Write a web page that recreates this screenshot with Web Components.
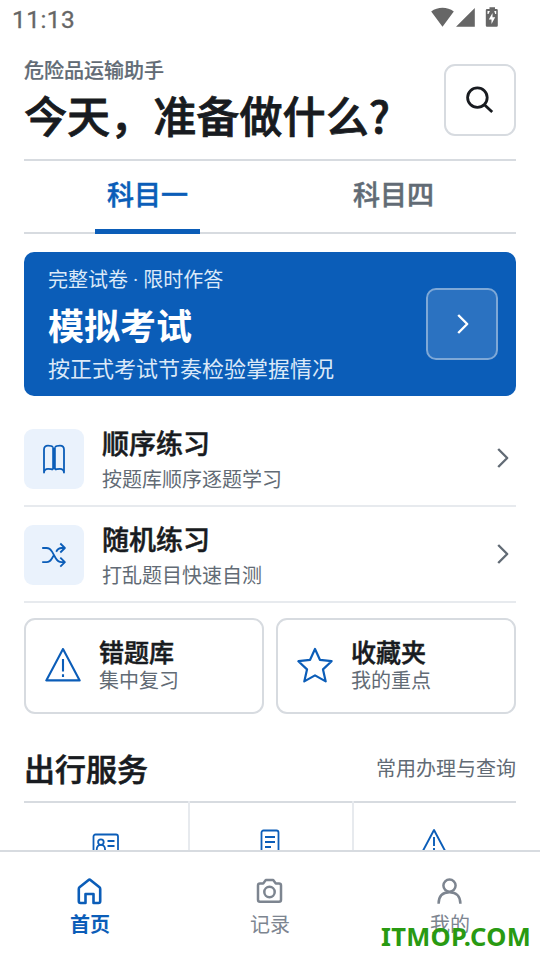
<!DOCTYPE html>
<html lang="zh-CN">
<head>
<meta charset="utf-8">
<title>危险品运输助手</title>
<style>
html,body{margin:0;padding:0}
body{width:540px;height:960px;overflow:hidden;background:#fff;
 --blue:#0b5db8;--ink:#181b20;--muted:#626b75;--line:#d7dbe0;--soft:#e7eaee;
 font-family:"Noto Sans CJK SC",sans-serif;color:var(--ink)}
</style>
</head>
<body>
<exam-app></exam-app>
<script>
const define = (name, css, html) => customElements.define(name, class extends HTMLElement {
  constructor() {
    super();
    const root = this.attachShadow({mode: 'open'});
    const t = document.createElement('template');
    t.innerHTML = `<style>*{box-sizing:border-box}:host{box-sizing:border-box;display:block}${css}</style>${typeof html === 'function' ? '' : html}`;
    root.append(t.content.cloneNode(true));
    if (typeof html === 'function') {
      const body = document.createElement('template');
      body.innerHTML = html(this);
      root.append(body.content.cloneNode(true));
    }
  }
});

const ICONS = {
  search: ['0 0 28 28', '<circle cx="11.4" cy="11.6" r="9.8"/><path d="M18.7 18.9 26.2 26"/>', 2.8],
  chevron: ['0 0 12 20', '<path d="M1.2 1 10.2 10 1.200 19"/>', 2.4],
  book: ['0 0 24 30', '<path d="M11.100 3.2v22.2M12.900 3.2v22.2M11 2.9C9.8 1.6 8 1.6 6 1.6 3.5 1.6 2 3.2 2 5.6v23c.2-2.2 1.5-3.7 4-3.7 2.200 0 4 0 5 1M13 2.900C14.200 1.600 16 1.600 18 1.600c2.500 0 4 1.600 4 4v23c-.2-2.200-1.500-3.700-4-3.700-2.200 0-4 0-5 1"/>', 1.8],
  shuffle: ['0 0 26 26', '<path d="M1.200 6h4.300c3 0 4.300 1.500 5.700 3.900L14.600 16c1.500 2.700 3 4.100 6 4.100h3.500M1.200 20.100h4.300c3 0 4.300-1.500 5.700-4.100L12.500 13.800M15.200 9.700C16.500 7.300 18 6 20.600 6h3.500M19.300 1.500 23.900 6l-4.600 4.500M19.300 15.600l4.600 4.500-4.600 4.500"/>', 1.8],
  warn: ['0 0 36 36', '<path d="M18 2 1.300 33.400h33.400L18 2z"/><path d="M18 12v12.500M18 27.200v2.800"/>', 2.100],
  star: ['0 0 36 36', '<path d="m18 2 4.900 10.800 11.700 1.400-8.600 8.200 2.700 12L18 28.400 7.300 34.400l2.700-12L1.400 14.200l11.700-1.400z"/>', 2.2],
  card: ['0 0 28 24', '<rect x="1.500" y="1.500" width="24.500" height="20.500" rx="2"/><circle cx="8.900" cy="9.100" r="2.800"/><path d="M4.700 17c0-3.300 1.600-5.100 4.200-5.100s4.200 1.800 4.200 5.100M15.500 8h7M15.500 13h7"/>', 1.8],
  doc: ['0 0 20 26', '<rect x="1.500" y="1.500" width="17" height="23" rx="2"/><path d="M5 8h10M5 13h10M5 18h6"/>', 1.8],
  alert: ['0 0 26 26', '<path d="M13 2 .8 25h24.400L13 2z"/><path d="M13 9v9M13 20v2"/>', 1.9],
  home: ['0 0 28 28', '<path d="M2.800 12.500v11.800q0 1.700 1.700 1.700h5v-9h8v9h5q1.700 0 1.700-1.700V11.900q0-1-.7-1.600L14.700 3.200q-1.200-1-2.400 0L3.500 10.300q-.7.600-.7 1.600z"/>', 2.6],
  camera: ['0 0 28 28', '<path d="M4 6.500h3.200l2.600-3.400h7.400l2.600 3.400H23q2 0 2 2v14.300q0 2-2 2H4q-2 0-2-2V8.500q0-2 2-2z"/><circle cx="13.500" cy="15" r="5.200"/>', 2.5],
  user: ['0 0 28 28', '<circle cx="13.500" cy="8.600" r="6.100"/><path d="M2.600 26.800C2.600 19 6.900 15.300 13.500 15.300s10.900 3.700 10.900 11.500"/>', 2.5]
};

define('ui-icon', 'svg{display:block;width:100%;height:100%;fill:none;stroke:currentColor;stroke-linejoin:round}', el => {
  const [box, body, w] = ICONS[el.getAttribute('name')];
  return `<svg viewBox="${box}" stroke-width="${w}">${body}</svg>`;
});

define('status-bar', ':host{height:40px;display:flex;justify-content:space-between;padding:0 41px 0 12px;color:#666}span{font:24.400px/39px Roboto,sans-serif;letter-spacing:.5px;-webkit-text-stroke:.3px}svg{width:68px;height:22px;margin-top:6px;fill:#666}',
 `<span>11:13</span><svg viewBox="0 0 68 22"><path d="M.2 5.500C6.700.600 16.300.600 22.800 5.500L11.500 20.800zM43.800 2v18.800H25z"/><path fill-rule="evenodd" d="M56 3h2.500V1.200h5.500V3h1.600q1.200 0 1.200 1.200v15.400q0 1.200-1.200 1.200H56q-1.200 0-1.200-1.200V4.200Q54.800 3 56 3zm5.500 4-3.700 6.500h2.700v4.500l3.700-6.800h-2.700z"/><path fill="#fff" d="M56.500 5h2.400l-1.400 3h-1zM63.200 5h2v3h-1z"/></svg>`);

define('app-header', ':host{display:flex;justify-content:space-between;height:121px;margin:0 24px;border-bottom:2px solid var(--line)}p{margin:0;font-size:20px;line-height:28px;font-weight:500;-webkit-text-stroke:.2px;color:var(--muted);padding-top:16px}h1{margin:0;font-size:43.100px;line-height:60px;font-weight:500;-webkit-text-stroke:.8px;white-space:nowrap}div.b{width:72px;height:72px;border:2px solid var(--line);border-radius:11px;margin-top:24px;display:grid;place-items:center}ui-icon{width:28px;height:28px}',
 `<div><p>危险品运输助手</p><h1>今天，准备做什么?</h1></div><div class="b"><ui-icon name="search"></ui-icon></div>`);

define('subject-tabs', ':host{display:flex;height:73px;margin:0 24px;box-shadow:inset 0 -2px var(--line);font-size:27px;line-height:66px;font-weight:500;-webkit-text-stroke:.5px;color:var(--muted)}div{flex:1;display:flex;justify-content:center;padding-left:1px}.on{color:var(--blue);padding:0 0 0 1px}.on span{width:105px;height:73px;text-align:center;border-bottom:5px solid var(--blue)}',
 `<div class="on"><span>科目一</span></div><div><span>科目四</span></div>`);

define('exam-hero', ':host{display:flex;justify-content:space-between;height:144px;margin:18px 24px 0;border-radius:10px;background:var(--blue);color:#dbe9f8;padding:13px 18px 0 24px}p{margin:0;font-size:20px;line-height:30px}p:first-child{font-family:Roboto,"Noto Sans CJK SC",sans-serif}h2{margin:0;color:#fff;font-size:36px;line-height:54px;font-weight:700;margin-top:2px}p.d{font-size:22px;line-height:32px}.b{width:72px;height:72px;border:2px solid #7ea8d7;border-radius:10px;background:#2b72c1;color:#fff;display:grid;place-items:center;margin-top:23px}ui-icon{width:12px;height:20px;margin-left:1px}',
 `<div class="t"><p>完整试卷 · 限时作答</p><h2>模拟考试</h2><p class="d">按正式考试节奏检验掌握情况</p></div><div class="b"><ui-icon name="chevron"></ui-icon></div>`);

define('practice-row', ':host{display:flex;height:96px;margin:0 24px;border-bottom:2px solid var(--soft);padding:18px 7px 0 0}.i{width:60px;height:60px;border-radius:9px;background:#eaf2fc;color:var(--blue);display:grid;place-items:center}.t{flex:1;padding-left:18px;margin-top:-5px}h3{margin:0;font-size:27px;line-height:38px;font-weight:500;-webkit-text-stroke:.5px}p{margin:0;font-size:20px;line-height:34px;color:var(--muted)}.c{width:12px;height:20px;color:var(--muted);margin-top:19px}.book{width:24px;height:30px}.shuffle{width:26px;height:26px}',
 el => `<div class="i"><ui-icon class="${el.getAttribute('icon')}" name="${el.getAttribute('icon')}"></ui-icon></div><div class="t"><h3><slot></slot></h3><p><slot name="note"></slot></p></div><ui-icon class="c" name="chevron"></ui-icon>`);

define('quick-card', ':host{display:flex;flex:1;height:96px;border:2px solid var(--line);border-radius:11px;padding:0 18px 0 19px;gap:18px}ui-icon{width:36px;height:36px;color:var(--blue);margin-top:27px}h3{margin:0;font-size:25px;line-height:30px;font-weight:500;-webkit-text-stroke:.5px;padding-top:16px}p{margin:0;font-size:20px;line-height:27px;color:var(--muted)}',
 el => `<ui-icon name="${el.getAttribute('icon')}"></ui-icon><div><h3><slot></slot></h3><p><slot name="note"></slot></p></div>`);

define('service-section', '.h{display:flex;justify-content:space-between;align-items:center;height:66px;margin:21px 24px 0;color:var(--muted);font-size:20px}h2{margin:0;color:var(--ink);font-size:31px;line-height:44px;font-weight:500;-webkit-text-stroke:.6px}.h span{margin-bottom:1px}.g{margin:0 24px;border-top:2px solid var(--line);height:49px;display:grid;grid-template-columns:166px 164px 162px;}.g div{border-right:2px solid var(--soft);margin-top:-2px;display:flex;justify-content:center}.g div:last-child{border:0}.card{width:28px;height:24px;margin-top:32px}.doc{width:20px;height:26px;margin-top:28px;margin-left:-2px}.alert{width:26px;height:26px;margin:27px 2px 0 0}ui-icon{color:var(--blue);flex:none}',
 `<div class="h"><h2>出行服务</h2><span>常用办理与查询</span></div><div class="g"><div><ui-icon class="card" name="card"></ui-icon></div><div><ui-icon class="doc" name="doc"></ui-icon></div><div><ui-icon class="alert" name="alert"></ui-icon></div></div>`);

define('nav-item', ':host{flex:1;display:flex;flex-direction:column;align-items:center;padding-top:25px;font-size:20px;line-height:30px;color:#7d8590}:host([active]){color:var(--blue);font-weight:700}ui-icon{width:28px;height:28px;margin-bottom:4px}',
 el => `<ui-icon name="${el.getAttribute('icon')}"></ui-icon><span><slot></slot></span>`);

define('bottom-nav', ':host{display:flex;height:110px;background:#fff;border-top:2px solid var(--line)}',
 `<nav-item icon="home" active>首页</nav-item><nav-item icon="camera">记录</nav-item><nav-item icon="user">我的</nav-item>`);

define('site-mark', ':host{position:absolute;left:381px;top:919px;font:700 25.500px/34px "Noto Sans",sans-serif;letter-spacing:.3px;color:#299a12;white-space:nowrap}', `<slot></slot>`);

define('exam-app', ':host{position:relative;width:540px;height:960px;background:#fff;overflow:hidden;display:flex;flex-direction:column}main{height:850px;overflow:hidden}.rows{padding-top:15px}.cards{display:flex;gap:12px;margin:15px 24px 0}',
 `<main><status-bar></status-bar><app-header></app-header><subject-tabs></subject-tabs><exam-hero></exam-hero>
 <div class="rows"><practice-row icon="book">顺序练习<span slot="note">按题库顺序逐题学习</span></practice-row><practice-row icon="shuffle">随机练习<span slot="note">打乱题目快速自测</span></practice-row></div>
 <div class="cards"><quick-card icon="warn">错题库<span slot="note">集中复习</span></quick-card><quick-card icon="star">收藏夹<span slot="note">我的重点</span></quick-card></div>
 <service-section></service-section></main><bottom-nav></bottom-nav><site-mark>ITMOP.COM</site-mark>`);
</script>
</body>
</html>
